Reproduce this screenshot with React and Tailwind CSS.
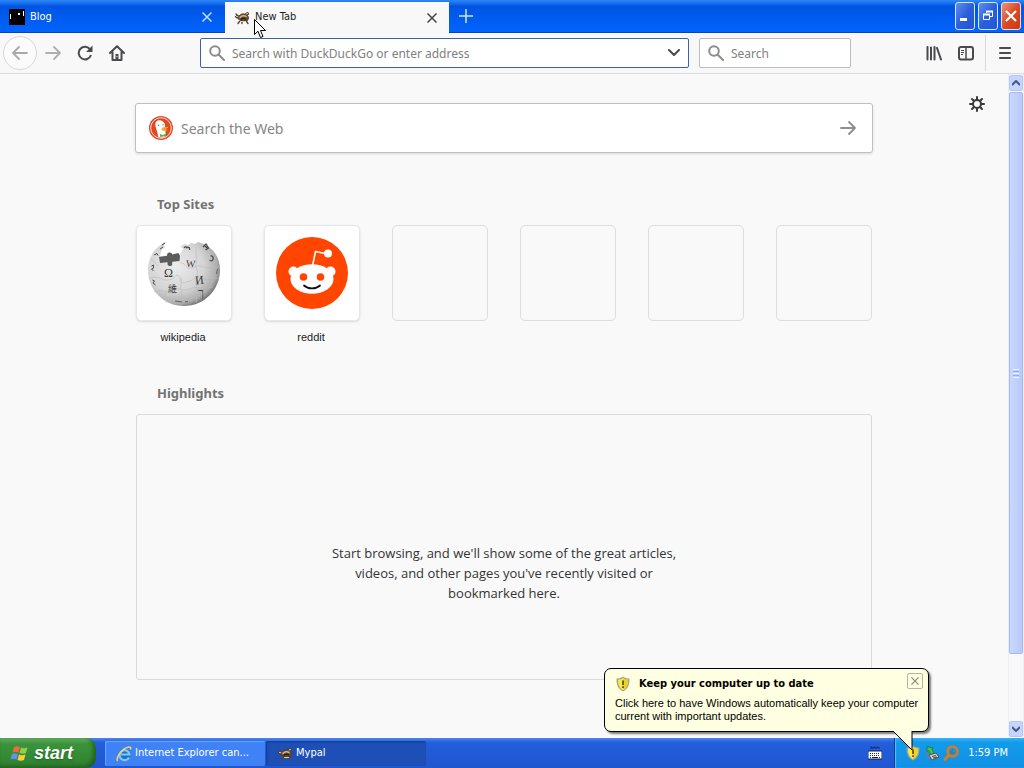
import React, { useState } from 'react';

const uiFont = "font-['DejaVu_Sans_Condensed','Noto_Sans',sans-serif]";
const smallFont = "font-['Liberation_Sans',Arial,sans-serif]";

const topSites = [
    { name: 'wikipedia', logo: WikipediaLogo },
    { name: 'reddit', logo: RedditLogo },
    null,
    null,
    null,
    null,
];

function GeckoIcon() {
    return (
        <svg viewBox="0 0 16 16" className="w-4 h-4 shrink-0" fill="none" strokeLinecap="round" strokeLinejoin="round">
            <path d="M1.500 6.500c1-1.500 2.500-1.500 3.500-.5C6.500 4 9 3.500 10.500 4c1.500-.2 2-2 3.500-1.500 1.500.6.5 2.500-.5 3C15 7 15 9.500 13 11H8C6 11 4.500 9.500 4.300 8.300 3 8.500 1.500 8 1.500 6.500z" fill="#66503a" stroke="#4b3929" strokeWidth=".8" />
            <path d="M6 7.500c1.500-2 4.500-2.200 6-1" stroke="#d9b37c" strokeWidth="1.500" />
            <path d="M7 9.500c1.200-1.500 3.500-1.500 4.500-.5" stroke="#2c211a" strokeWidth="1.500" />
            <path d="M2 4l1.500 1.500M5.500 11.500L4 13.500M8 11.500v2M12.500 11.500l1.500 2" stroke="#5b4735" strokeWidth="1.400" />
            <path d="M2.500 6.500h1M12.500 3.800l1-.3" stroke="#e6cfa6" strokeWidth="1" />
            <path d="M7.500 11.500h4" stroke="#d9cfbf" strokeWidth="1" />
        </svg>
    );
}

function BlogIcon() {
    return (
        <svg viewBox="0 0 16 16" className="w-4 h-4 shrink-0">
            <path d="M0 0h16v16H0z" fill="#000" />
            <path d="M1 5h1v5H1zM14 2h1v5h-1zM9 4h2v2H9z" fill="#fff" />
        </svg>
    );
}

function CrossIcon({ className }) {
    return (
        <svg viewBox="0 0 10 10" className={className} fill="none" stroke="currentColor" strokeWidth="1.500">
            <path d="M0.500 0.500l9 9M9.500 0.500l-9 9" />
        </svg>
    );
}

function ArrowIcon({ className }) {
    return (
        <svg viewBox="0 0 16 16" className={className} fill="none" stroke="currentColor" strokeWidth="1.800" strokeLinecap="round" strokeLinejoin="round">
            <path d="M1 8h14M9 2l6 6-6 6" />
        </svg>
    );
}

function SearchIcon() {
    return (
        <svg viewBox="0 0 16 16" className="w-4 h-4 shrink-0 text-[#8c8c8c]" fill="none" stroke="currentColor" strokeWidth="2" strokeLinecap="round">
            <circle cx="6" cy="6" r="4.800" />
            <path d="M9.800 9.800L15 15" />
        </svg>
    );
}

function ShieldIcon() {
    return (
        <svg viewBox="0 0 16 16" className="w-4 h-4 shrink-0">
            <path d="M8 0.500c2 1.500 4 2 6.500 2 0 6-1 10-6.500 13C2.500 12.500 1.500 8.500 1.500 2.500 4 2.500 6 2 8 0.500z" fill="#a3a398" />
            <path d="M8 2c1.700 1.200 3 1.500 5 1.700 0 4.800-1 8-5 10.500-4-2.500-5-5.700-5-10.500C5 3.500 6.300 3.200 8 2z" fill="#fdea3c" />
            <path d="M8 2c1.700 1.200 3 1.500 5 1.700 0 4.800-1 8-5 10.500z" fill="#eed028" />
            <path d="M7.200 4.500h1.600V9H7.200zM7.200 10.300h1.600V12H7.200z" fill="#4a4010" />
        </svg>
    );
}

function DuckIcon() {
    return (
        <svg viewBox="0 0 24 24" className="w-6 h-6 shrink-0">
            <circle cx="12" cy="12" r="12" fill="#de4a26" />
            <circle cx="12" cy="12" r="10.300" fill="#de4a26" stroke="#f7d9ce" strokeWidth="1" />
            <path d="M7 6c1-2 5-2.500 7.500 0 2 2 1.500 4 1.500 6l1 8c-2 2-6 2-8 0.500C9 17 7 13 6.500 10 6.200 8.500 6.200 7 7 6z" fill="#fff" />
            <path d="M13 12c2-1.500 5-1 6-1 1 .5-2 2-3.500 2 1.500.5 3 .5 3 1-.5 1-4 1.500-5.500 0-.6-.6-.5-1.500 0-2z" fill="#f8a81c" />
            <path d="M11 18l3 1 3-1.500v3L14 20.500l-3 .5z" fill="#6ea84c" />
            <circle cx="9.500" cy="9.300" r=".8" fill="#6b7890" />
            <circle cx="14" cy="8.800" r=".7" fill="#6b7890" />
        </svg>
    );
}

function WikipediaLogo() {
    return (
        <svg viewBox="0 0 72 72" className="w-[72px] h-[72px]" aria-hidden="true">
            <defs>
                <radialGradient id="globe" cx="38%" cy="38%" r="66%">
                    <stop offset="0" stopColor="#ececec" />
                    <stop offset=".6" stopColor="#d4d4d4" />
                    <stop offset=".88" stopColor="#adadad" />
                    <stop offset="1" stopColor="#707070" />
                </radialGradient>
            </defs>
            <path d="M18 4.500l-2 4 1 2-3 2-2 6.500 19-1 3-3 1-4-3-1 4-3 4 1 3-2 4 1 3-2 3 1C65 10 72 20 72 33c0 20-16 36-36 36S0 53 0 33C0 20 7 10 18 4.500z" fill="url(#globe)" />
            <path d="M11 20l8-1.200c.3-1.500 0-3 2-3.300s3 .5 3 2l6.500-1.500 1.500 3-.5 5-7 .7c-1 1.500.5 3-1 4s-4 0-4-1.500c0-1 .5-2-.5-2l-7 .8z" fill="#5c5c5c" />
            <g fill="none" stroke="#b8b8b8" strokeWidth=".6">
                <path d="M3 22c4 2 4 6 8 7M1 42c6-3 9-2 13 0s8 1 12-1c2-5 7-2 6 2s5 3 10 1 5-4 9-3 8 2 20 0M6 55c7-3 11 0 15-1s5-4 10-2 8 1 13-1 9 2 21-1M32 26c5-1 5 4 9 5s6-3 11-2 8 3 17 1M18 66c1-5-2-8 0-12M33 69c-1-5 2-9 0-15s2-8 0-13M49 66c-2-5 1-8 0-14s-2-7 0-13-2-7-1-12 0-9 0-17" />
            </g>
            <g fill="#3a3a3a" fontFamily="Liberation Serif, serif" fontSize="11">
                <text x="16" y="40" fontSize="12">Ω</text>
                <text x="38" y="30" fontSize="10" transform="rotate(4 42 25)">W</text>
                <text x="47" y="47" fontSize="12" transform="rotate(-6 51 42)">И</text>
                <text x="20" y="55" fontSize="9" fontFamily="Noto Sans CJK SC, sans-serif">維</text>
                <text x="50" y="60" fontSize="12">ך</text>
            </g>
            <g fill="none" stroke="#4a4a4a" strokeWidth="1.200">
                <path d="M36 11c1-1.500 3-1.500 3 .5M39 10.500c1.500-1 3 0 2.500 2.500M55 10l3-3 2.500 4-3 2M56.500 8.500l3 3M62.500 19c2-.5 3 1 2.500 3.500-.5 1.500-2 1.500-3.500 1" />
                <path d="M14 8l3-2M12 12l3-2M6 18l3-1.500 1 2M3.500 29l2-1v3l-2 1 2 2M4.500 43l2 1-1.500 2 2.500 2" strokeWidth="1" />
                <path d="M27 64l7 1M37 65l3-.5M69.500 32l-1 5" strokeWidth=".8" />
            </g>
        </svg>
    );
}

function RedditLogo() {
    return (
        <svg viewBox="0 0 72 72" className="w-[72px] h-[72px]" aria-hidden="true">
            <circle cx="36" cy="36" r="36" fill="#ff4500" />
            <path d="M36.500 29l3-14.500 12 2.500" fill="none" stroke="#fff" strokeWidth="1.600" strokeLinejoin="round" />
            <circle cx="52" cy="16.500" r="4" fill="#fff" />
            <circle cx="17.500" cy="34.500" r="5" fill="#fff" />
            <circle cx="54.500" cy="34.500" r="5" fill="#fff" />
            <ellipse cx="36" cy="42" rx="21.500" ry="14.800" fill="#fff" />
            <circle cx="27.500" cy="40" r="3.800" fill="#ff4500" />
            <circle cx="44.500" cy="40" r="3.800" fill="#ff4500" />
            <path d="M28 48.500c4 3.800 12 3.800 16 0" fill="none" stroke="#111" strokeWidth="1.800" strokeLinecap="round" />
        </svg>
    );
}

function TitleBar() {
    return (
        <div className="flex h-[33px] shrink-0 justify-between border-b border-[#0a43b8] bg-linear-to-b from-[#2f88f8] from-0% via-[#0054e3] via-20% to-[#0264fe]">
            <div role="tablist" className={`flex text-[11px] ${uiFont}`}>
                <div className="flex w-[225px] items-center pt-0.5 pl-[9px] pr-[13px] text-white">
                    <button type="button" role="tab" aria-selected="false" className="flex flex-1 items-center gap-[5px]">
                        <BlogIcon />
                        Blog
                    </button>
                    <button type="button" aria-label="Close Blog" className="text-[#c4dcff]">
                        <CrossIcon className="w-[10px] h-[10px]" />
                    </button>
                </div>
                <div className="mt-0.5 -mb-px flex w-[224px] items-center bg-[#f8f8f9] pl-[9px] pr-3 text-[#222]">
                    <button type="button" role="tab" aria-selected="true" className="flex flex-1 items-center gap-[5px]">
                        <GeckoIcon />
                        New Tab
                    </button>
                    <button type="button" aria-label="Close New Tab" className="text-[#444]">
                        <CrossIcon className="w-[10px] h-[10px]" />
                    </button>
                </div>
                <button type="button" aria-label="Open a new tab" className="px-2.5 text-[#cfe3ff]">
                    <svg viewBox="0 0 14 14" className="w-3.5 h-3.5" stroke="currentColor" strokeWidth="1.500">
                        <path d="M7 0v14M0 7h14" />
                    </svg>
                </button>
            </div>
            <div className="flex gap-[3px] pt-0.5 pr-[3px] text-white">
                <button type="button" aria-label="Minimize" className="h-7 w-5 rounded-[3px] border border-[#dbe6fb] bg-linear-to-br from-[#5f8ff0] via-[#2a5fdc] to-[#2056d8]">
                    <svg viewBox="0 0 18 26" className="w-full h-full">
                        <path d="M4 15h7v3H4z" fill="currentColor" />
                    </svg>
                </button>
                <button type="button" aria-label="Restore" className="h-7 w-5 rounded-[3px] border border-[#dbe6fb] bg-linear-to-br from-[#5f8ff0] via-[#2a5fdc] to-[#2056d8]">
                    <svg viewBox="0 0 18 26" className="w-full h-full" fill="none" stroke="currentColor">
                        <path d="M4.500 11.500h6v5h-6zM4 11h7M4 12h7M7.500 10V8.500h6v5H11M7 8h7M7 9h7" />
                    </svg>
                </button>
                <button type="button" aria-label="Close window" className="h-7 w-5 rounded-[3px] border border-[#f4dcd8] bg-linear-to-br from-[#ee9079] via-[#dc4a22] to-[#c83a10]">
                    <svg viewBox="0 0 18 26" className="w-full h-full" stroke="currentColor" strokeWidth="2.200">
                        <path d="M4 8l10 10M14 8L4 18" />
                    </svg>
                </button>
            </div>
        </div>
    );
}

function ToolButton({ label, className = '', children }) {
    return (
        <button type="button" aria-label={label} className={`flex h-8 w-8 shrink-0 items-center justify-center ${className}`}>
            {children}
        </button>
    );
}

function Toolbar() {
    return (
        <div className="flex h-[41px] shrink-0 items-center border-b border-[#d4d9e0] bg-[#f8f8f9] px-[3px] font-['Noto_Sans',sans-serif] text-[#4a4a4d]">
            <button type="button" aria-label="Back" className="flex h-[34px] w-[34px] shrink-0 items-center justify-center rounded-full border border-[#d8d8d8] bg-[#fbfbfb] text-[#aaa]">
                <ArrowIcon className="h-4 w-4 rotate-180" />
            </button>
            <ToolButton label="Forward" className="text-[#aeaeae]">
                <ArrowIcon className="h-4 w-4" />
            </ToolButton>
            <ToolButton label="Reload">
                <svg viewBox="0 0 16 16" className="w-4 h-4" fill="none" stroke="currentColor" strokeWidth="2">
                    <path d="M13.200 4.500A6.300 6.300 0 1 0 14 10" />
                    <path d="M15.500 0.500V7H9z" fill="currentColor" stroke="none" />
                </svg>
            </ToolButton>
            <ToolButton label="Home">
                <svg viewBox="0 0 16 16" className="w-4 h-4" fill="none" stroke="currentColor" strokeWidth="2" strokeLinejoin="round" strokeLinecap="round">
                    <path d="M1 8l7-6.800L15 8M3.500 7v8h9V7" />
                    <path d="M6.500 9h3v6h-3z" fill="currentColor" stroke="none" />
                    <path d="M8 11.500v.1" stroke="#f8f8f9" strokeWidth="1" />
                </svg>
            </ToolButton>
            <div className="ml-[67px] flex h-[30px] min-w-0 flex-1 items-center gap-[7px] rounded-[2px] border border-[#3b62a8] bg-white px-2">
                <SearchIcon />
                <input
                    aria-label="Address"
                    placeholder="Search with DuckDuckGo or enter address"
                    className="min-w-0 flex-1 pt-0.5 text-[12px] outline-none placeholder:text-[#808080]"
                />
                <button type="button" aria-label="Show history">
                    <svg viewBox="0 0 12 8" className="h-2 w-3" fill="none" stroke="currentColor" strokeWidth="2" strokeLinecap="round" strokeLinejoin="round">
                        <path d="M1 1l5 5 5-5" />
                    </svg>
                </button>
            </div>
            <div className="ml-2.5 flex h-[30px] w-[152px] items-center gap-[7px] rounded-[2px] border border-[#bcbcbc] bg-white px-2">
                <SearchIcon />
                <input aria-label="Search" placeholder="Search" className="min-w-0 flex-1 pt-0.5 text-[12px] outline-none placeholder:text-[#808080]" />
            </div>
            <ToolButton label="Library" className="ml-[67px]">
                <svg viewBox="0 0 16 16" className="w-4 h-4" fill="none" stroke="currentColor" strokeWidth="2" strokeLinecap="round">
                    <path d="M1.500 2v12.500M5 2.500v12M8.500 2v12.500M11 3l4 11.500" />
                </svg>
            </ToolButton>
            <ToolButton label="Sidebars">
                <svg viewBox="0 0 16 16" className="w-4 h-4" fill="none" stroke="currentColor" strokeWidth="2">
                    <rect x="1" y="2" width="14" height="12.500" rx="2" />
                    <path d="M8 2v12.500" strokeWidth="1.500" />
                    <path d="M3 5.500h3M3 7.500h3M3 9.500h2" strokeWidth="1" />
                </svg>
            </ToolButton>
            <div className="mx-[3px] h-9 w-px bg-[#d9d9d9]" />
            <ToolButton label="Open menu">
                <svg viewBox="0 0 14 14" className="h-3.5 w-3.5" stroke="currentColor" strokeWidth="2" strokeLinecap="round">
                    <path d="M2 2h10M2 7h10M2 12h10" />
                </svg>
            </ToolButton>
        </div>
    );
}

function SiteTile({ site }) {
    if (!site) {
        return <li className="h-24 w-24 rounded-[5px] border border-[#dedede]" />;
    }
    const Logo = site.logo;
    return (
        <li className="w-24">
            <a href={`#${site.name}`} className="block">
                <span className="flex h-24 w-24 items-center justify-center rounded-[5px] border border-[#e6e6e6] bg-white shadow-sm">
                    <Logo />
                </span>
                <span className={`mt-2 block pr-0.5 text-center text-[11px] leading-4 text-[#1a1a1a] ${smallFont}`}>{site.name}</span>
            </a>
        </li>
    );
}

function NewTabPage() {
    return (
        <main className="relative flex-1 bg-[#f9f9fa] font-['Noto_Sans',sans-serif]">
            <button type="button" aria-label="Customize page" className="absolute top-[22px] right-[23px] text-[#3a3a3a]">
                <svg viewBox="0 0 16 16" className="w-4 h-4" fill="none" stroke="currentColor" strokeWidth="2" strokeLinecap="round">
                    <circle cx="8" cy="8" r="4" />
                    <path d="M8 1v2.500M8 12.500V15M1 8h2.500M12.500 8H15M3 3l1.800 1.800M11.200 11.200L13 13M13 3l-1.800 1.800M4.800 11.200L3 13" />
                </svg>
            </button>
            <div className="mx-auto max-w-[736px] pt-[29px] pb-14">
                <form className="-mx-px flex h-[50px] items-center gap-2 rounded-[3px] border border-[#c0c0c0] bg-white px-[13px] shadow-sm" onSubmit={(e) => e.preventDefault()}>
                    <DuckIcon />
                    <input aria-label="Search the Web" placeholder="Search the Web" className="min-w-0 flex-1 text-[14px] outline-none placeholder:text-[#858585]" />
                    <button type="submit" aria-label="Submit search" className="mr-[3px] text-[#8e8e8e]">
                        <ArrowIcon className="h-4 w-4" />
                    </button>
                </form>

                <section className="pt-[39px]">
                    <h2 className="pl-[21px] text-[13px] font-bold leading-6 text-[#737373]">Top Sites</h2>
                    <ul className="mt-[9px] flex justify-between">
                        {topSites.map((site, index) => (
                            <SiteTile key={index} site={site} />
                        ))}
                    </ul>
                </section>

                <section className="pt-9">
                    <h2 className="pl-[21px] text-[13px] font-bold leading-6 text-[#737373]">Highlights</h2>
                    <div className="mt-[9px] min-h-[266px] rounded-[3px] border border-[#d9d9d9] pt-32">
                        <p className="mx-auto max-w-[346px] text-center font-['Open_Sans',sans-serif] text-[13px] leading-5 text-[#333]">
                            Start browsing, and we'll show some of the great articles, videos, and other pages you've recently visited or
                            bookmarked here.
                        </p>
                    </div>
                </section>
            </div>
        </main>
    );
}

function ScrollBar() {
    return (
        <div className="flex w-4 shrink-0 flex-col border-x border-[#eceef2] bg-[#f8f8fb] pt-px">
            <button type="button" aria-label="Scroll up" className="flex h-4 items-center justify-center rounded-[2px] border border-[#b4c8f6] bg-[#c5d5fc] text-[#43598c]">
                <svg viewBox="0 0 8 6" className="h-1.5 w-2" fill="none" stroke="currentColor" strokeWidth="2">
                    <path d="M0 5l4-4 4 4" />
                </svg>
            </button>
            <div className="mt-px flex h-[562px] flex-col items-center justify-center gap-px rounded-[2px] border border-[#a5b9ee] bg-linear-to-r from-[#cad8fd] to-[#b9cafa]">
                <span className="h-px w-1.5 bg-[#eef4fe]" />
                <span className="h-px w-1.5 bg-[#8cb0f8]" />
                <span className="h-px w-1.5 bg-[#eef4fe]" />
                <span className="h-px w-1.5 bg-[#8cb0f8]" />
                <span className="h-px w-1.5 bg-[#eef4fe]" />
            </div>
            <button type="button" aria-label="Scroll down" className="mt-auto mb-px flex h-4 items-center justify-center rounded-[2px] border border-[#b4c8f6] bg-[#c5d5fc] text-[#43598c]">
                <svg viewBox="0 0 8 6" className="h-1.5 w-2" fill="none" stroke="currentColor" strokeWidth="2">
                    <path d="M0 1l4 4 4-4" />
                </svg>
            </button>
        </div>
    );
}

function UpdateBalloon({ onClose }) {
    return (
        <div className="absolute right-[95px] bottom-9 z-10 w-[325px] rounded-[7px] border border-black bg-[#ffffe1] pt-1.5 pr-[5px] pb-2 pl-2.5 text-[11px] text-black shadow-[2px_2px_2px_rgba(0,0,0,0.5)]">
            <div className="flex items-center">
                <ShieldIcon />
                <strong className={`ml-2 flex-1 leading-[18px] ${uiFont}`}>Keep your computer up to date</strong>
                <button type="button" aria-label="Dismiss" onClick={onClose} className="-mt-1.5 flex h-4 w-4 items-center justify-center rounded-[2px] border border-[#b5b5a2] text-[#8b8b7c]">
                    <CrossIcon className="h-2 w-2" />
                </button>
            </div>
            <p className={`mt-1 leading-[13px] ${smallFont}`}>Click here to have Windows automatically keep your computer current with important updates.</p>
            <svg viewBox="0 0 22 21" className="absolute top-full right-3.5 h-[21px] w-[22px]">
                <path d="M1 0l19 19V0z" fill="#ffffe1" />
                <path d="M1 0l19 19V0" fill="none" stroke="#000" />
            </svg>
        </div>
    );
}

function TaskBar() {
    return (
        <footer className={`flex h-[30px] shrink-0 bg-linear-to-b from-[#4a87ee] from-0% via-[#245edb] via-15% to-[#2056cf] text-[11px] text-white ${uiFont}`}>
            <button type="button" className="flex w-24 items-center gap-1 rounded-r-[10px] bg-linear-to-b from-[#5fae5e] via-[#3a933a] via-20% to-[#2f8230] pl-2.5 shadow-[inset_-3px_-2px_4px_rgba(20,70,20,0.6)]">
                <svg viewBox="0 0 20 20" className="h-5 w-5">
                    <path d="M4 4c2-1 4-1 6 0L8.500 9.500c-2-1-4-1-6 0z" fill="#f26a3b" />
                    <path d="M11 4.500c2 1 4 1 6.500 0L16 10c-2 1-4 1-6.500 0z" fill="#8fd14a" />
                    <path d="M2 11c2-1 4-1 6 0l-1.500 5.500c-2-1-4-1-6 0z" fill="#5e93ef" />
                    <path d="M9 11.500c2 1 4 1 6.500 0L14 17c-2 1-4 1-6.500 0z" fill="#fbce3a" />
                </svg>
                <span className="font-['Liberation_Sans',sans-serif] text-[18px] font-bold italic leading-6 text-shadow-md">start</span>
            </button>
            <div className="ml-[9px] flex flex-1 gap-px pt-[3px] pb-0.5">
                <button type="button" className="flex w-40 items-center gap-[3px] rounded-[2px] bg-[#3f82f5] pl-[11px] shadow-[inset_1px_1px_1px_#6ba3fb]">
                    <svg viewBox="0 0 16 16" className="h-4 w-4 shrink-0" fill="none">
                        <circle cx="8.500" cy="8.500" r="6.300" fill="#1d6fd0" />
                        <path d="M13 11.500A5 5 0 1 1 13.500 8.500H5" stroke="#7ccbfa" strokeWidth="2.200" />
                        <path d="M1.500 15C0 12 5 3 12 1.200c3-.7 3 1 2.500 2.300" stroke="#f3d06a" strokeWidth="1.600" />
                    </svg>
                    Internet Explorer can...
                </button>
                <button type="button" aria-pressed="true" className="flex w-40 items-center gap-[3px] rounded-[2px] bg-[#1d4fb6] pl-[11px] shadow-[inset_1px_1px_2px_#143c90]">
                    <GeckoIcon />
                    Mypal
                </button>
            </div>
            <button type="button" aria-label="Keyboard layout" className="pr-3 pl-3.5">
                <svg viewBox="0 0 14 14" className="h-3.5 w-3.5">
                    <path d="M3 3V1h1v1h2V1h1v1h2V1h1v1h2" fill="none" stroke="#16296b" />
                    <path d="M0 5h14v8H0z" fill="#fff" stroke="#182552" />
                    <path d="M2 7.500h10M2 9.500h10" stroke="#182552" strokeDasharray="1 1" />
                    <path d="M2 11.500h1M4 11.500h6M11 11.500h1" stroke="#182552" />
                </svg>
            </button>
            <div className="flex items-center gap-[3px] border-l border-[#0c3b99] bg-linear-to-b from-[#34b0f5] from-0% via-[#129beb] via-15% to-[#1290e4] pl-2.5 pr-4 shadow-[inset_1px_0_1px_#4fc8fa]">
                <ShieldIcon />
                <svg viewBox="0 0 16 16" className="h-4 w-4">
                    <path d="M5 10l7-2 3 4-7 3z" fill="#d3d6d0" stroke="#4d5250" />
                    <path d="M8 11.500l4-1M9 13l4-1" stroke="#444" />
                    <path d="M3 1.500L9 3l-1 1.500 2 3.500-3 1.500-2.500-4L3 6.500z" fill="#4cc04a" stroke="#21762a" strokeWidth=".8" />
                    <path d="M2.500 8l3 5" stroke="#737d86" strokeWidth="2" />
                </svg>
                <svg viewBox="0 0 16 16" className="h-4 w-4" fill="none" stroke="#dc7a1c" strokeLinecap="round">
                    <circle cx="9.500" cy="6.500" r="5" strokeWidth="2.400" />
                    <path d="M6 10l-4 4.500" strokeWidth="3" />
                    <path d="M9.500 4.500L8 8h3" stroke="#a65612" />
                </svg>
                <time className="ml-1.5">1:59 PM</time>
            </div>
        </footer>
    );
}

function Pointer() {
    return (
        <svg viewBox="0 0 12 20" className="pointer-events-none absolute top-[19px] left-[254px] z-20 h-5 w-3">
            <path d="M0.500 0.500v15l3.500-3.300L6.500 18.500l2.500-1-2.500-6h5z" fill="#fff" stroke="#000" />
        </svg>
    );
}

export default function App() {
    const [showBalloon, setShowBalloon] = useState(true);

    return (
        <div className="relative flex min-h-screen flex-col bg-[#f9f9fa]">
            <TitleBar />
            <Toolbar />
            <div className="flex flex-1">
                <NewTabPage />
                <ScrollBar />
            </div>
            <TaskBar />
            {showBalloon ? <UpdateBalloon onClose={() => setShowBalloon(false)} /> : null}
            <Pointer />
        </div>
    );
}
